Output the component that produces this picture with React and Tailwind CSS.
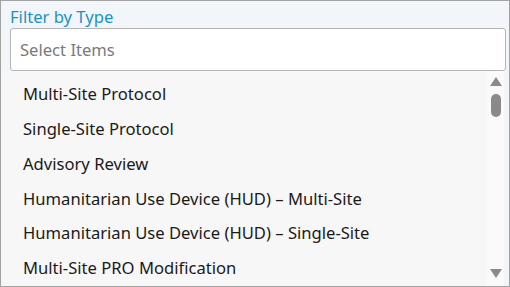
import React from "react";

const items = [
  "Multi-Site Protocol",
  "Single-Site Protocol",
  "Advisory Review",
  "Humanitarian Use Device (HUD) – Multi-Site",
  "Humanitarian Use Device (HUD) – Single-Site",
  "Multi-Site PRO Modification",
];

export default function App() {
  return (
    <div
      className="w-[510px] h-[287px] border border-[#a3a3a3] bg-[#f2f6fa] flex flex-col overflow-hidden"
      style={{ fontFamily: '"Noto Sans", "Open Sans", sans-serif' }}
    >
      {/* Label */}
      <div className="pl-[9px] pt-[5px] h-[28px] text-[16.6px] leading-[22px] text-[#1b92c4]">
        Filter by Type
      </div>

      {/* Search input */}
      <div className="ml-[9px] mr-[3px] h-[44px] bg-white border border-[#b5b5b5] rounded-[3px] flex items-center px-[9px] pt-[1px] text-[16.6px] text-[#7a7a7a]">
        Select Items
      </div>

      {/* List */}
      <div className="flex-1 ml-[2px] mr-[5px] bg-[#f7f7f7] flex">
        <div className="flex-1 pt-[6px]">
          {items.map((item) => (
            <div
              key={item}
              className="h-[34.8px] flex items-center pl-[20px] text-[16.6px] text-[#1a1a1a] whitespace-nowrap"
            >
              {item}
            </div>
          ))}
        </div>

        {/* Scrollbar */}
        <div className="w-[17px] bg-[#fafafa] flex flex-col items-center pt-[6px] pb-[8px]">
          <svg width="12" height="9" viewBox="0 0 12 9">
            <path d="M6 0 L12 9 L0 9 Z" fill="#8a8a8a" />
          </svg>
          <div className="mt-[8px] w-[10px] h-[23px] rounded-full bg-[#8a8a8a]" />
          <div className="flex-1" />
          <svg width="12" height="9" viewBox="0 0 12 9">
            <path d="M0 0 L12 0 L6 9 Z" fill="#8a8a8a" />
          </svg>
        </div>
      </div>
    </div>
  );
}
